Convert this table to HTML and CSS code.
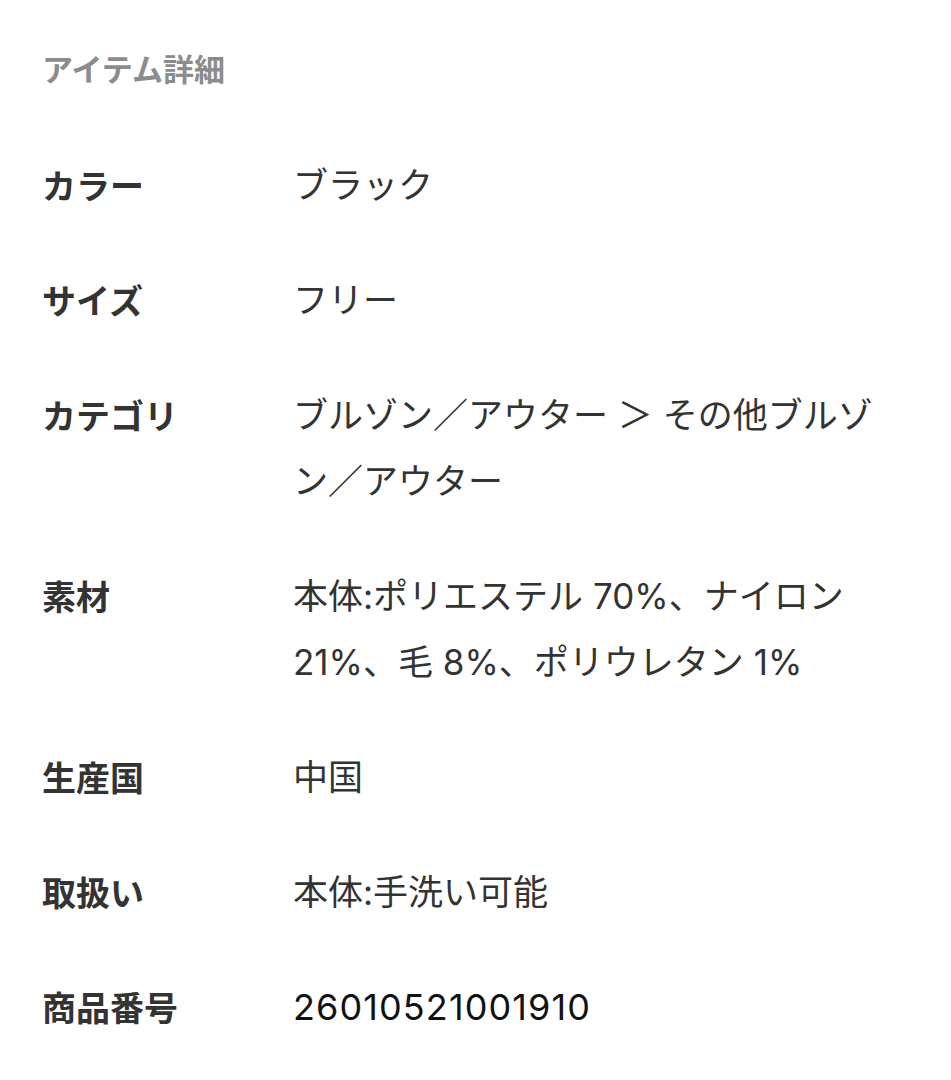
FILE: index.html
```html
<!DOCTYPE html>
<html lang="ja">
<head>
<meta charset="utf-8">
<link rel="stylesheet" href="styles.css">
</head>
<body>
<section class="details">
  <h2 class="title">アイテム詳細</h2>
  <dl class="spec">
    <div class="row"><dt>カラー</dt><dd>ブラック</dd></div>
    <div class="row"><dt>サイズ</dt><dd>フリー</dd></div>
    <div class="row"><dt>カテゴリ</dt><dd>ブルゾン／アウター ＞ その他ブルゾン／アウター</dd></div>
    <div class="row"><dt>素材</dt><dd>本体:ポリエステル 70%、ナイロン 21%、毛 8%、ポリウレタン 1%</dd></div>
    <div class="row"><dt>生産国</dt><dd>中国</dd></div>
    <div class="row"><dt>取扱い</dt><dd>本体:手洗い可能</dd></div>
    <div class="row"><dt>商品番号</dt><dd class="num">26010521001910</dd></div>
  </dl>
</section>
</body>
</html>
```

FILE: styles.css
```css
html, body {
  margin: 0;
  padding: 0;
  background: #fff;
}
body {
  font-family: "Noto Sans CJK JP", "Noto Sans", sans-serif;
  color: #333;
}
.details {
  padding: 48px 50px 0 42px;
}
.title {
  margin: 0;
  font-size: 31px;
  line-height: 40px;
  font-weight: 700;
  color: #8c8c8c;
}
.spec {
  margin: 64px 0 0;
  display: flex;
  flex-direction: column;
  gap: 49px;
}
.row {
  display: grid;
  grid-template-columns: 251px 1fr;
}
.row dt {
  font-size: 34px;
  line-height: 66px;
  font-weight: 700;
  color: #333;
}
.row dd {
  margin: 0;
  font-family: "Inter", "Noto Sans CJK JP", sans-serif;
  font-size: 35px;
  line-height: 66px;
  font-weight: 400;
  color: #333;
}
.row dd.num {
  font-size: 36px;
  letter-spacing: 1.1px;
  color: #111;
}
```
